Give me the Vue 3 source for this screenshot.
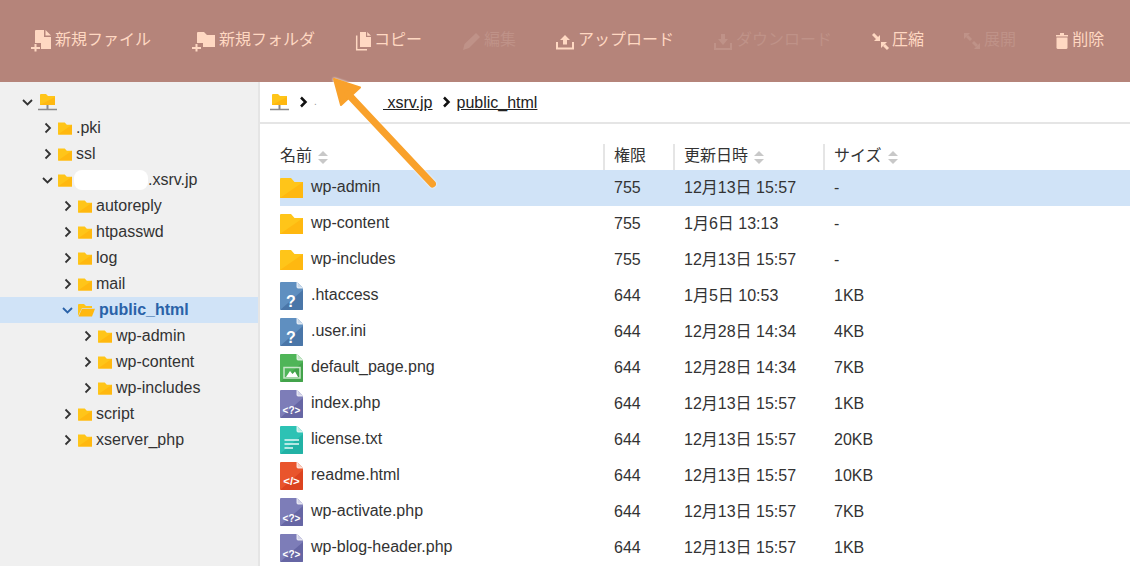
<template>
  <div class="page">
    <header class="toolbar">
      <div v-for="tool in tools" :key="tool.label" class="tool" :class="{ off: tool.off }">
        <svg :width="tool.w" height="22" :viewBox="`${tool.vx || 0} 0 ${tool.w} 22`" fill="currentColor">
          <template v-if="tool.icon === 'file'">
            <path d="M5 0H13V7H20V19H10V13H4V1A1 1 0 0 1 5 0Z" />
            <path d="M14.500 0L20 5.500H14.500Z" />
            <path d="M3.500 14H5.500V17H9V19H5.500V21.500H3.500V19H0V17H3.500Z" />
          </template>
          <template v-else-if="tool.icon === 'folder'">
            <path d="M5 3A1 1 0 0 1 6 2H12L15 5H23V17H11V13H5Z" />
            <path d="M3.500 14H5.500V17H9V19H5.500V21.500H3.500V19H0V17H3.500Z" />
          </template>
          <template v-else-if="tool.icon === 'copy'">
            <path d="M6 2H12V7H17V17H6Z" />
            <path d="M13.200 2L17 5.800H13.200Z" />
            <path d="M2.700 5.500V19.800H13" fill="none" stroke="currentColor" stroke-width="1.500" />
          </template>
          <path v-else-if="tool.icon === 'edit'" d="M0 20L1.500 14L13 3L17 7L6 18Z" />
          <template v-else-if="tool.icon === 'upload'">
            <path d="M10 5L15 10H12V14.500H8V10H5Z" />
            <path d="M2 12V18.500H18V12" fill="none" stroke="currentColor" stroke-width="2" />
          </template>
          <template v-else-if="tool.icon === 'download'">
            <path d="M8 4H12V9H15L10 15L5 9H8Z" />
            <path d="M2 13V19H18V13" fill="none" stroke="currentColor" stroke-width="2" />
          </template>
          <template v-else-if="tool.icon === 'compress'">
            <path d="M10 11V5L4 11Z" />
            <path d="M3 4L8 9" stroke="currentColor" stroke-width="3" />
            <path d="M11 12H17L11 18Z" />
            <path d="M14 15L18 19" stroke="currentColor" stroke-width="3" />
          </template>
          <template v-else-if="tool.icon === 'expand'">
            <path d="M1 3H7L1 9Z" />
            <path d="M4 6L8 10" stroke="currentColor" stroke-width="3" />
            <path d="M17 19H11L17 13Z" />
            <path d="M14 16L10 12" stroke="currentColor" stroke-width="3" />
          </template>
          <template v-else>
            <path d="M6 3H10V5H14V6.500H2V5H6Z" />
            <path d="M2.500 7.500H13.500V17.500A1.500 1.500 0 0 1 12 19H4A1.500 1.500 0 0 1 2.500 17.500Z" />
          </template>
        </svg>
        <span class="tool-label">{{ tool.label }}</span>
      </div>
    </header>

    <div class="body">
      <aside class="tree">
        <div
          v-for="node in tree"
          :key="node.name + node.level"
          class="tree-row"
          :class="{ selected: node.selected }"
          :style="{ paddingLeft: 21 + node.level * 20 + 'px' }"
        >
          <svg class="chevron" width="13" height="12" viewBox="0 0 13 12" fill="none" stroke="currentColor" stroke-width="1.800">
            <path v-if="node.open" d="M2 4L6.500 8.500L11 4" />
            <path v-else d="M4.500 1.500L9 6L4.500 10.500" />
          </svg>
          <svg v-if="node.root" class="node-icon" width="19" height="17" viewBox="0 0 19 17">
            <path d="M2 1A1 1 0 0 1 3 0H8L10 2H17V11H2Z" fill="#ffc519" />
            <path d="M2 11L17 3V11Z" fill="#ffb810" />
            <path d="M9.500 11V15" stroke="#8a8a8a" stroke-width="2" />
            <path d="M0 15.500H19" stroke="#8a8a8a" stroke-width="1.500" />
          </svg>
          <svg v-else-if="node.selected" class="node-icon" width="17" height="14" viewBox="0 0 17 14">
            <path d="M0 13V2A1 1 0 0 1 1 1H6L8 3H14V5H4Z" fill="#ffc519" />
            <path d="M4 5.800H17L14 13.500H0.500Z" fill="#ffb810" />
          </svg>
          <svg v-else class="node-icon" width="14" height="13" viewBox="0 0 23 20">
            <path d="M0 0H11L14.500 4H23V20H0Z" fill="#ffc519" />
            <path d="M0 20L23 4V20Z" fill="#ffb810" />
          </svg>
          <span v-if="node.hidden" class="blob"></span>
          <span class="node-name">{{ node.name }}</span>
        </div>
      </aside>

      <main class="main">
        <nav class="crumbs">
          <svg width="19" height="17" viewBox="0 0 19 17">
            <path d="M2 1A1 1 0 0 1 3 0H8L10 2H17V11H2Z" fill="#ffc519" />
            <path d="M2 11L17 3V11Z" fill="#ffb810" />
            <path d="M9.500 11V15" stroke="#8a8a8a" stroke-width="2" />
            <path d="M0 15.500H19" stroke="#8a8a8a" stroke-width="1.500" />
          </svg>
          <svg class="crumb-sep first" width="9" height="12" viewBox="0 0 9 12" fill="none" stroke="#111" stroke-width="2.500">
            <path d="M2 1.500L6.500 6L2 10.500" />
          </svg>
          <span class="crumb-dot">.</span>
          <a class="crumb-link">&nbsp;xsrv.jp</a>
          <svg class="crumb-sep" width="9" height="12" viewBox="0 0 9 12" fill="none" stroke="#111" stroke-width="2.500">
            <path d="M2 1.500L6.500 6L2 10.500" />
          </svg>
          <a class="crumb-link">public_html</a>
        </nav>

        <div class="table">
          <div class="thead">
            <div v-for="col in columns" :key="col.label" class="th">
              <span class="th-label">{{ col.label }}</span>
              <svg v-if="col.sort" class="sort" width="10" height="13" viewBox="0 0 10 13" fill="#c8c8c8">
                <path d="M5 0L10 5H0Z" />
                <path d="M5 13L0 8H10Z" />
              </svg>
            </div>
          </div>
          <div v-for="row in rows" :key="row.name" class="tr" :class="{ active: row.active }">
            <div class="td name">
              <svg v-if="row.type === 'dir'" width="23" height="20" viewBox="0 0 23 20">
                <path d="M0 1A1 1 0 0 1 1 0H11L14.500 4H23V20H0Z" fill="#ffc519" />
                <path d="M0 20L23 4V20Z" fill="#ffb810" />
              </svg>
              <svg v-else width="23" height="28" viewBox="0 0 23 28">
                <path d="M1 0H17L23 6V27A1 1 0 0 1 22 28H1A1 1 0 0 1 0 27V1A1 1 0 0 1 1 0Z" :fill="fileColors[row.type][0]" />
                <path d="M0.300 27.700L23 8V27A1 1 0 0 1 22 28H1Z" :fill="fileColors[row.type][1]" />
                <path d="M17 0L23 6H18A1 1 0 0 1 17 5Z" :fill="fileColors[row.type][2]" />
                <path d="M17 0V5A1 1 0 0 0 18 6H23" fill="none" stroke="#fff" stroke-width="0.800" />
                <text v-if="row.type === 'unknown'" x="11" y="25" class="glyph big">?</text>
                <text v-else-if="row.type === 'php'" x="11.500" y="23.500" class="glyph">&lt;?&gt;</text>
                <text v-else-if="row.type === 'html'" x="11.500" y="23" class="glyph wide">&lt;/&gt;</text>
                <template v-else-if="row.type === 'txt'">
                  <path d="M4.500 14H19M4.500 18H19M4.500 22H13" stroke="#e6f8f6" stroke-width="1.500" />
                </template>
                <template v-else>
                  <rect x="4" y="13.500" width="16" height="10.500" fill="none" stroke="#c6e6c8" stroke-width="1.500" />
                  <path d="M6 23L10 17L12.500 20L15 17.500L18 23Z" fill="#fff" />
                </template>
              </svg>
              <span class="file-name">{{ row.name }}</span>
            </div>
            <div class="td">{{ row.perm }}</div>
            <div class="td">{{ row.date }}</div>
            <div class="td">{{ row.size }}</div>
          </div>
        </div>
      </main>
    </div>

    <!-- annotation arrow painted over the screenshot -->
    <svg class="arrow" width="130" height="130" viewBox="0 0 130 130">
      <path d="M3 5L29 13.500L10 31Z" fill="#f9a12b" stroke="#f9a12b" stroke-width="2" stroke-linejoin="round" />
      <path d="M17 20L101.500 110" stroke="#f9a12b" stroke-width="7" stroke-linecap="round" />
    </svg>
  </div>
</template>

<script setup>
// vx nudges the drawing inside its box so the labels land on the same x
const tools = [
  { label: '新規ファイル', icon: 'file', w: 22 },
  { label: '新規フォルダ', icon: 'folder', w: 26, vx: -1 },
  { label: 'コピー', icon: 'copy', w: 17, vx: 1 },
  { label: '編集', icon: 'edit', w: 20, vx: -1, off: true },
  { label: 'アップロード', icon: 'upload', w: 20, vx: 1 },
  { label: 'ダウンロード', icon: 'download', w: 20, vx: 1, off: true },
  { label: '圧縮', icon: 'compress', w: 18, vx: 2 },
  { label: '展開', icon: 'expand', w: 18, vx: 1, off: true },
  { label: '削除', icon: 'trash', w: 14, vx: 2 }
]

const tree = [
  { name: '', level: 0, open: true, root: true },
  { name: '.pki', level: 1 },
  { name: 'ssl', level: 1 },
  { name: '.xsrv.jp', level: 1, open: true, hidden: true },
  { name: 'autoreply', level: 2 },
  { name: 'htpasswd', level: 2 },
  { name: 'log', level: 2 },
  { name: 'mail', level: 2 },
  { name: 'public_html', level: 2, open: true, selected: true },
  { name: 'wp-admin', level: 3 },
  { name: 'wp-content', level: 3 },
  { name: 'wp-includes', level: 3 },
  { name: 'script', level: 2 },
  { name: 'xserver_php', level: 2 }
]

const columns = [
  { label: '名前', sort: true },
  { label: '権限' },
  { label: '更新日時', sort: true },
  { label: 'サイズ', sort: true }
]

const fileColors = {
  unknown: ['#5f8fc0', '#4a76a8', '#c9d9ea'],
  image: ['#4fb558', '#43a34b', '#c6e6c8'],
  php: ['#7d7db8', '#6666a4', '#d3d3e8'],
  txt: ['#2dc2b4', '#22b2a5', '#bfeae5'],
  html: ['#e9552c', '#dc4320', '#f8cfc2']
}

const rows = [
  { name: 'wp-admin', type: 'dir', perm: '755', date: '12月13日 15:57', size: '-', active: true },
  { name: 'wp-content', type: 'dir', perm: '755', date: '1月6日 13:13', size: '-' },
  { name: 'wp-includes', type: 'dir', perm: '755', date: '12月13日 15:57', size: '-' },
  { name: '.htaccess', type: 'unknown', perm: '644', date: '1月5日 10:53', size: '1KB' },
  { name: '.user.ini', type: 'unknown', perm: '644', date: '12月28日 14:34', size: '4KB' },
  { name: 'default_page.png', type: 'image', perm: '644', date: '12月28日 14:34', size: '7KB' },
  { name: 'index.php', type: 'php', perm: '644', date: '12月13日 15:57', size: '1KB' },
  { name: 'license.txt', type: 'txt', perm: '644', date: '12月13日 15:57', size: '20KB' },
  { name: 'readme.html', type: 'html', perm: '644', date: '12月13日 15:57', size: '10KB' },
  { name: 'wp-activate.php', type: 'php', perm: '644', date: '12月13日 15:57', size: '7KB' },
  { name: 'wp-blog-header.php', type: 'php', perm: '644', date: '12月13日 15:57', size: '1KB' }
]
</script>

<style>
html,
body {
  margin: 0;
  background: #fff;
  overflow: hidden;
}
</style>

<style scoped>
.page {
  position: relative;
  width: 1130px;
  height: 566px;
  overflow: hidden;
  font-family: "Liberation Sans", "Noto Sans CJK JP", sans-serif;
  font-size: 16px;
  line-height: 20px;
  color: #333;
}

.toolbar {
  display: flex;
  align-items: center;
  gap: 40px;
  height: 82px;
  padding-left: 31px;
  box-sizing: border-box;
  background: #b5847a;
  color: #ffd8c2;
}

.tool {
  display: flex;
  align-items: center;
  gap: 2px;
  white-space: nowrap;
}

.tool.off {
  color: #bf9288;
}

.tool-label {
  margin-bottom: 2px;
}

.body {
  display: flex;
  height: 484px;
}

.tree {
  width: 260px;
  flex: none;
  box-sizing: border-box;
  padding-top: 7px;
  background: #f0f0f0;
  border-right: 2px solid #e5e5e5;
}

.tree-row {
  display: flex;
  align-items: center;
  height: 26px;
}

.tree-row.selected {
  background: #d0e3f7;
  color: #2a62a8;
  font-weight: 700;
}

.chevron {
  flex: none;
  margin-right: 4px;
}

.node-icon {
  flex: none;
  margin-right: 4px;
}

.blob {
  width: 74px;
  height: 20px;
  margin-left: -2px;
  border-radius: 8px;
  background: #fff;
}

.main {
  flex: 1;
  min-width: 0;
}

.crumbs {
  display: flex;
  align-items: center;
  height: 40px;
  padding-left: 10px;
  border-bottom: 2px solid #e5e5e5;
  color: #222;
}

.crumb-sep {
  margin: 0 5px 0 10px;
}

.crumb-sep.first {
  margin: 0 6px 0 10px;
}

.crumb-dot {
  width: 69px;
  font-size: 10px;
  color: #999;
}

.crumb-link {
  margin-top: 2px;
  text-decoration: underline;
}

.table {
  padding: 20px 0 0 20px;
}

.thead,
.tr {
  display: grid;
  grid-template-columns: 323px 70px 150px 1fr;
}

.thead {
  height: 26px;
}

.th {
  display: flex;
  align-items: center;
  gap: 6px;
  padding-left: 9px;
  border-left: 2px solid #e5e5e5;
}

.th:first-child {
  padding-left: 0;
  border-left: 0;
}

.th-label {
  margin-bottom: 2px;
}

.tr {
  height: 36px;
  align-items: center;
}

.tr.active {
  background: #d0e3f7;
}

.td {
  padding-left: 11px;
  white-space: nowrap;
}

.td.name {
  display: flex;
  align-items: center;
  gap: 8px;
  padding-left: 0;
}

.file-name {
  margin-bottom: 2px;
}

.glyph {
  fill: #fff;
  font-size: 10px;
  font-weight: 700;
  text-anchor: middle;
}

.glyph.big {
  font-size: 16px;
}

.glyph.wide {
  font-size: 11.500px;
}

.arrow {
  position: absolute;
  left: 331px;
  top: 74px;
  filter: drop-shadow(0 0 1px #fff);
  pointer-events: none;
}
</style>
